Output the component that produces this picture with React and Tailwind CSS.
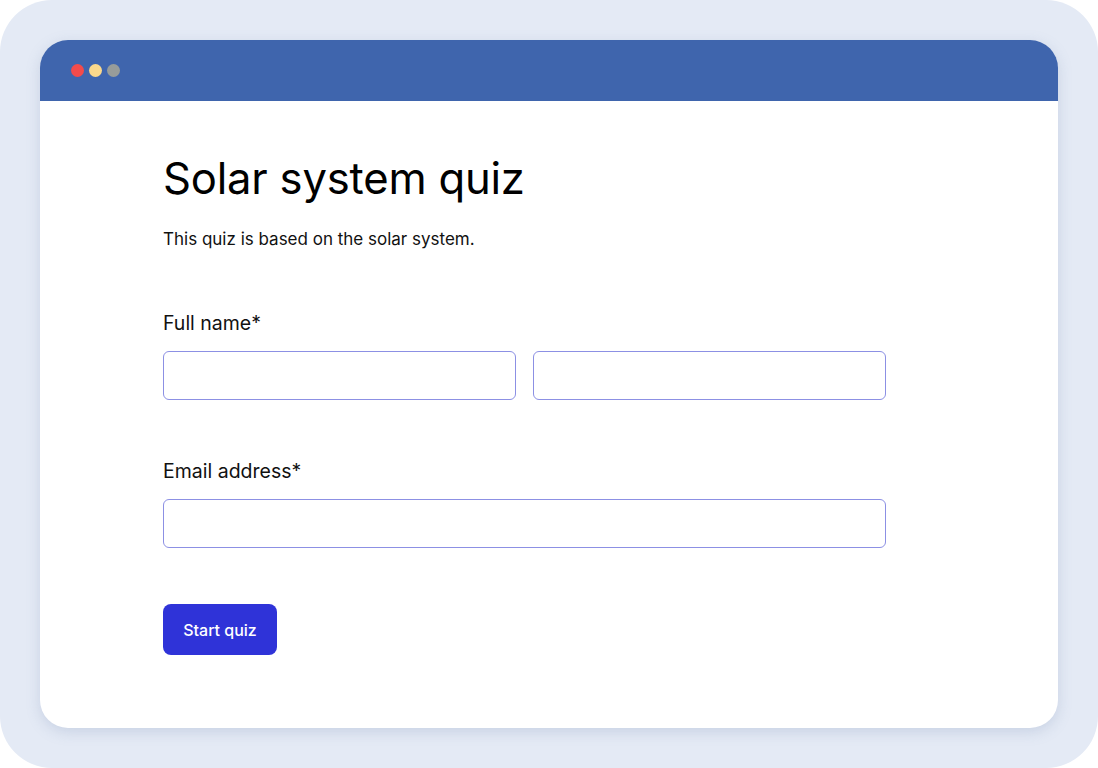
import React from 'react';

const App = () => {
  return (
    <div className="w-[1098px] h-[768px] bg-white font-['Inter',sans-serif]">
      <div className="w-full h-full rounded-[52px] bg-[#e4eaf5] p-10">
        <div className="h-full rounded-[28px] bg-white overflow-hidden flex flex-col shadow-[0_4px_14px_rgba(120,140,180,0.25)]">
          {/* Window bar */}
          <div className="h-[61px] bg-[#3f65ad] flex items-center gap-[5px] pl-[31px] shrink-0">
            <span className="w-[13px] h-[13px] rounded-full bg-[#f34b4b]" />
            <span className="w-[13px] h-[13px] rounded-full bg-[#fbd98c]" />
            <span className="w-[13px] h-[13px] rounded-full bg-[#979c9a]" />
          </div>

          {/* Form */}
          <div className="pl-[123px] pt-[50px] w-[846px]">
            <h1 className="text-[43.6px] leading-[56px] text-black tracking-[-0.2px]">Solar system quiz</h1>
            <p className="mt-[20px] text-[17px] leading-[24px] text-[#111]">This quiz is based on the solar system.</p>

            <label className="block mt-[59px] text-[19.5px] leading-[26px] text-[#111]">Full name*</label>
            <div className="mt-[15px] flex gap-[17px]">
              <input className="flex-1 h-[49px] rounded-[6px] border-[1.5px] border-[#8c90e4] bg-white outline-none" />
              <input className="flex-1 h-[49px] rounded-[6px] border-[1.5px] border-[#8c90e4] bg-white outline-none" />
            </div>

            <label className="block mt-[58px] text-[19.5px] leading-[26px] text-[#111]">Email address*</label>
            <input className="block mt-[15px] w-full h-[49px] rounded-[6px] border-[1.5px] border-[#8c90e4] bg-white outline-none" />

            <button className="mt-[56px] w-[114px] h-[51px] rounded-[8px] bg-[#2f33d8] text-white text-[16px] font-medium">
              Start quiz
            </button>
          </div>
        </div>
      </div>
    </div>
  );
};

export default App;
